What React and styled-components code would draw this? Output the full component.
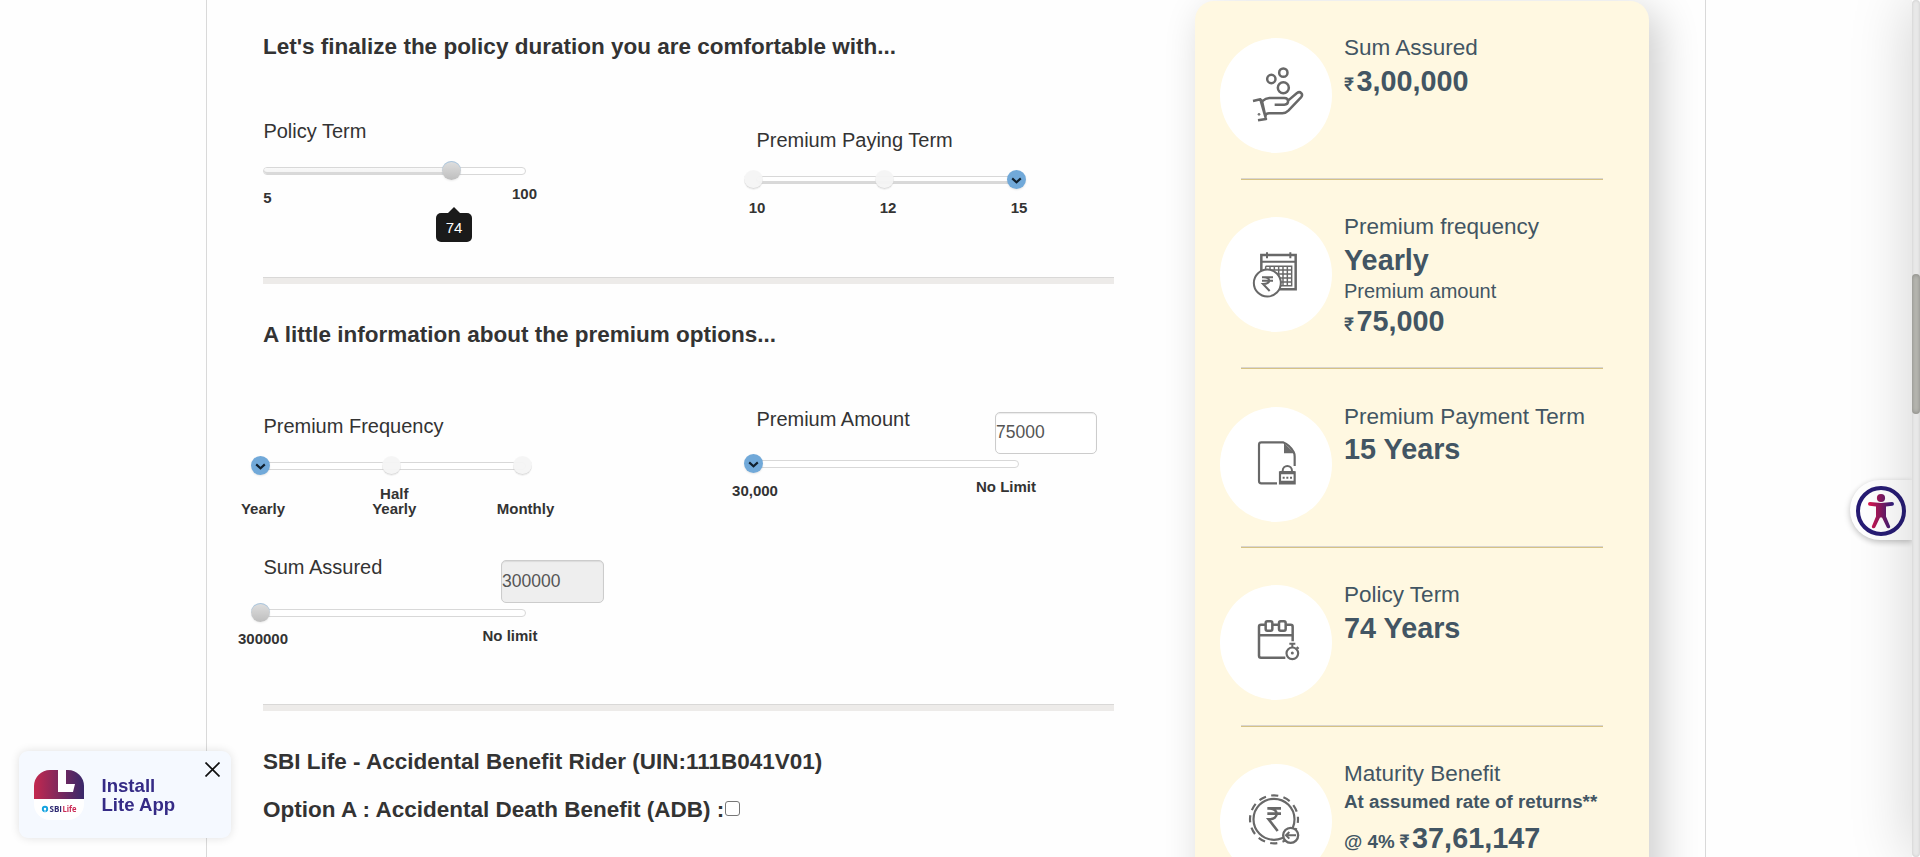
import React from "react";
import styled, { createGlobalStyle, css } from "styled-components";

const GlobalStyle = createGlobalStyle`
  * { box-sizing: border-box; }
  body {
    margin: 0;
    background: #fefefe;
    color: #333;
    font-family: "Liberation Sans", Arial, sans-serif;
    overflow: hidden;
  }
`;

const Page = styled.div`
  height: 857px;
  overflow: hidden;
  padding-left: 206px;
`;

const Container = styled.main`
  display: flex;
  align-items: flex-start;
  width: 1500px;
  height: 857px;
  padding-left: 56px;
  border-left: 1px solid #d9d9d9;
  border-right: 1px solid #d9d9d9;
`;

const FormColumn = styled.div`
  flex: none;
  width: 851px;
  margin-right: 81px;
`;

const Section = styled.section`
  height: ${(p) => p.$height}px;
  padding-top: ${(p) => p.$top}px;
  ${(p) =>
    p.$ruled &&
    css`
      border-bottom: 6px solid #edebe9;
      box-shadow: inset 0 -1px 0 #d9d8d7;
    `}
`;

const Heading = styled.h3`
  margin: 0 0 ${(p) => p.$gap}px;
  font-size: 22.5px;
  line-height: 30px;
  font-weight: 700;
`;

const FieldRow = styled.div`
  display: grid;
  grid-template-columns: 493px 1fr;
  height: ${(p) => p.$height || 148}px;
`;

const Field = styled.div`
  width: 263px;
  padding-top: ${(p) => p.$drop || 0}px;
`;

const FieldHeader = styled.div`
  display: flex;
  align-items: flex-start;
  height: ${(p) => p.$height}px;
`;

const Label = styled.label`
  flex: none;
  width: ${(p) => p.$width || 238}px;
  padding-left: 0.4px;
  font-size: 20px;
  line-height: 28px;
  white-space: nowrap;
`;

const AmountInput = styled.input`
  flex: none;
  width: ${(p) => (p.disabled ? 103 : 102)}px;
  height: ${(p) => (p.disabled ? 43 : 42)}px;
  margin: 7px 0 0;
  padding: 0 0 ${(p) => (p.disabled ? 0 : 2)}px;
  border: 1px solid #ccc;
  border-radius: 5px;
  background: ${(p) => (p.disabled ? "#eee" : "#fff")};
  box-shadow: inset 0 1px 1px rgba(0, 0, 0, 0.08);
  color: #555;
  font: 17.5px "Liberation Sans", Arial, sans-serif;
`;

const Track = styled.div`
  position: relative;
  height: 8px;
  border: 1px solid #d8d8d8;
  border-radius: 4px;
  background: #fff;
`;

const Fill = styled.div`
  height: 6px;
  border-radius: 3px;
  background: ${(p) => (p.$plain ? "#fff" : "linear-gradient(#f9f9f9, #f2f2f2)")};
  box-shadow: inset 0 -2px 0 #d9d9d9;
`;

const knobStyles = {
  stop: css`
    background: rgba(244, 244, 244, 0.94);
    box-shadow: inset 0 -1px 0 rgba(0, 0, 0, 0.1), 0 1px 1px rgba(0, 0, 0, 0.06);
  `,
  grey: css`
    background: linear-gradient(#dfdfdf, #bebebe);
    box-shadow: inset 0 1px 0 #a9c6df, 0 1px 2px rgba(0, 0, 0, 0.08);
  `,
  active: css`
    background: #71a9d9;
    box-shadow: 0 1px 2px rgba(0, 0, 0, 0.1);
  `,
};

const Knob = styled.div`
  position: absolute;
  top: -7px;
  left: -13px;
  display: flex;
  align-items: center;
  justify-content: center;
  width: 19px;
  height: 19px;
  border-radius: 50%;
  ${(p) => knobStyles[p.$kind]}
`;

const Tooltip = styled.div`
  position: absolute;
  top: 45px;
  left: 172px;
  width: 36px;
  height: 29px;
  border-radius: 5px;
  background: #1a1a1a;
  color: #fff;
  font-size: 15px;
  line-height: 29px;
  text-align: center;
  &::before {
    content: "";
    position: absolute;
    left: 12px;
    top: -6px;
    border: 6px solid transparent;
    border-top: 0;
    border-bottom-color: #1a1a1a;
  }
`;

const Ticks = styled.div`
  display: flex;
  justify-content: space-between;
`;

const Tick = styled.div`
  display: flex;
  justify-content: center;
  width: 0;
  margin: ${(p) => p.$top}px ${(p) => p.$pull || 0}px 0 ${(p) => p.$push || 0}px;
  font-size: 15px;
  line-height: 15px;
  font-weight: 700;
  text-align: center;
  white-space: pre;
`;

const OptionLine = styled.label`
  display: flex;
  align-items: center;
  margin-top: 18px;
  font-size: 22.5px;
  line-height: 30px;
  font-weight: 700;
`;

const Checkbox = styled.input`
  appearance: none;
  width: 15px;
  height: 15px;
  margin: 0 0 3px 1px;
  border: 1px solid #767676;
  border-radius: 3px;
  background: #fff;
`;

const SummaryCard = styled.aside`
  flex: none;
  width: 454px;
  height: 1000px;
  margin-top: 1px;
  padding: 37px 25px 0;
  border-radius: 19px;
  background: #fff8e1;
  box-shadow: 10px 10px 40px rgba(0, 0, 0, 0.2);
  color: #425563;
`;

const SummaryItem = styled.div`
  display: flex;
  gap: 12px;
  height: ${(p) => p.$height}px;
`;

const IconDisc = styled.div`
  flex: none;
  width: 112px;
  height: 115px;
  border-radius: 50%;
  background: #fff;
  svg { display: block; width: 112px; height: 115px; }
`;

const SummaryText = styled.div`
  margin-top: -5px;
  white-space: nowrap;
`;

const SummaryTitle = styled.div`
  font-size: 22.5px;
  line-height: 30px;
  margin-bottom: ${(p) => p.$gap ?? 1}px;
`;

const SummaryValue = styled.div`
  font-size: 28.8px;
  line-height: 34px;
  font-weight: 700;
  margin-top: ${(p) => p.$shift || 0}px;
`;

const SummaryCaption = styled.div`
  font-size: 20px;
  line-height: 26px;
  padding-top: 1px;
`;

const SummaryNote = styled.div`
  font-size: 18.75px;
  line-height: 24px;
  font-weight: 700;
`;

const Rate = styled.span`
  font-size: 18.75px;
  line-height: 1;
  margin-right: 5px;
`;

const Currency = styled.span`
  display: inline-block;
  width: 12.5px;
  font-family: Roboto, "Liberation Sans", sans-serif;
  font-size: 19px;
  line-height: 1;
  font-weight: 500;
`;

const Rule = styled.div`
  height: 2px;
  margin: 0 21px ${(p) => p.$gap}px;
  background: linear-gradient(#d9d5d0 50%, #d6c284 50%);
`;

const InstallCard = styled.div`
  position: fixed;
  left: 19px;
  top: 751px;
  display: flex;
  width: 212px;
  height: 87px;
  padding: 19px 11px 0 15px;
  border-radius: 9px;
  background: #f5f9ff;
  box-shadow: 0 0 10px rgba(0, 0, 0, 0.12);
`;

const InstallText = styled.div`
  flex: 1;
  margin: 6px 0 0 17.5px;
  color: #352b86;
  font-size: 18.6px;
  line-height: 19px;
  font-weight: 700;
`;

const CloseIcon = styled.svg`
  flex: none;
  width: 15px;
  height: 15px;
  margin-top: -8px;
`;

const AccessTab = styled.div`
  position: fixed;
  top: 480px;
  right: 8px;
  width: 62px;
  height: 60px;
  padding: 5px;
  border-radius: 30px 0 0 30px;
  background: #fff;
  box-shadow: 0 2px 6px rgba(0, 0, 0, 0.25);
  clip-path: inset(-12px 0 -12px -12px);
`;

const EdgeShade = styled.div`
  position: fixed;
  top: 0;
  right: 8px;
  width: 90px;
  height: 857px;
  overflow: hidden;
  pointer-events: none;
  &::after {
    content: "";
    position: absolute;
    top: 0;
    left: 90px;
    width: 200px;
    height: 857px;
    box-shadow: 0 0 58px rgba(0, 0, 0, 0.18);
  }
`;

const ScrollTrack = styled.div`
  position: fixed;
  top: 0;
  right: 0;
  width: 8px;
  height: 857px;
  padding-top: 274px;
  border-radius: 4px;
  background: #e8e8e8;
  box-shadow: inset 0 0 3px rgba(0, 0, 0, 0.15);
`;

const ScrollThumb = styled.div`
  height: 140px;
  border-radius: 4px;
  background: #babab4;
  box-shadow: inset 0 0 5px rgba(0, 0, 0, 0.3);
`;

const Chevron = () => (
  <svg width="19" height="19" viewBox="0 0 19 19" fill="none">
    <path d="M5.2 8.4l4.3 3.9 4.3-3.9" stroke="#10202e" strokeWidth="2.1" />
  </svg>
);

function Slider({ value, kind, stops = [], plain, tooltip, ticks }) {
  return (
    <>
      <Track>
        {value > 0 && <Fill $plain={plain} style={{ width: `${value}%` }} />}
        {stops.map((s) => (
          <Knob key={s} $kind="stop" style={{ marginLeft: s * 2.62 }} />
        ))}
        <Knob $kind={kind} style={{ marginLeft: value * 2.625 }}>
          {kind === "active" && <Chevron />}
        </Knob>
        {tooltip && <Tooltip>{tooltip}</Tooltip>}
      </Track>
      <Ticks>
        {ticks.map((t) => (
          <Tick key={t.text} $top={t.top} $pull={t.pull} $push={t.push}>
            {t.text}
          </Tick>
        ))}
      </Ticks>
    </>
  );
}

const ink = { fill: "none", stroke: "#686868", strokeWidth: 7.5 };

const HandCoinsIcon = () => (
  <svg viewBox="120 113 336 345" {...ink} strokeLinejoin="round">
    <circle cx="310" cy="217" r="12.5" />
    <circle cx="274" cy="236" r="12.5" />
    <circle cx="310" cy="262" r="16.5" />
    <path d="M219 302l22-5 17 59-24 4M241 297l5 5 11 50" />
    <path d="M246 303c8-7 14-10 22-10h45c15 0 15 20 0 20h-29M325 300l26-22c10-7 20 4 12 13l-38 40c-6 6-10 8-18 8h-40c-6 0-10 3-12 8" />
    <circle cx="237" cy="342" r="4" fill="#777" stroke="none" />
  </svg>
);

const CalendarRupeeIcon = () => (
  <svg viewBox="120 50 336 345" {...ink}>
    <path d="M244 212v-48h103v103h-48" />
    <path d="M244 184h104M261 156v18M331 156v18" strokeWidth="6" />
    <path
      d="M257 198h78v58h-32M257 198v12M270 198v10M283 198v12M296 198v56M309 198v58M322 198v58M262 209h73M288 221h47M298 233h37M302 245h33"
      strokeWidth="4.4"
    />
    <circle cx="262" cy="248" r="40.5" fill="#fff" strokeWidth="6" />
    <path d="M246 231h33M246 241h33M249 231c25-1 25 20 0 20l20 21" strokeWidth="6" />
  </svg>
);

const DocumentLockIcon = () => (
  <svg viewBox="120 50 336 345" {...ink}>
    <path d="M291 279h-47q-7 0-7-7V163q0-7 7-7h65q20 8 32 29c3 5 3 8 3 14v28" strokeWidth="6.5" />
    <path d="M312 158l32 31h-32z" fill="#6b6b6b" stroke="none" />
    <path d="M308 242c0-20 28-20 28 0" strokeWidth="6" />
    <path d="M300 246h44v33h-44z" strokeWidth="6.5" />
    <path d="M300 247h44M300 276h44" strokeWidth="10" />
    <path d="M308 262h30" strokeWidth="6" strokeDasharray="6 5" />
  </svg>
);

const CalendarTimerIcon = () => (
  <svg viewBox="120 585 336 345" {...ink}>
    <path d="M316 803h-73q-6 0-6-6v-87q0-6 6-6h13M277 704h18M318 704h14q6 0 6 6v44M238 736h99" />
    <rect x="257" y="694" width="20" height="28" rx="5" />
    <rect x="297" y="694" width="20" height="28" rx="5" />
    <circle cx="337" cy="790" r="17.5" strokeWidth="6.5" />
    <path d="M328 761h18M337 761v12M350 771l6 5" strokeWidth="6" />
    <circle cx="337" cy="789" r="4.5" fill="#6b6b6b" stroke="none" />
  </svg>
);

const CoinReturnIcon = () => (
  <svg viewBox="120 342 336 345" {...ink}>
    <circle cx="282" cy="508" r="72" strokeWidth="6.5" strokeDasharray="22 15.7" strokeDashoffset="11" />
    <circle cx="282" cy="508" r="61.5" strokeWidth="6.5" />
    <path d="M262 475h41M262 491h41M266 475c32 0 32 33 0 33l27 35" strokeWidth="8" />
    <circle cx="332" cy="556" r="22.5" fill="#fff" strokeWidth="7" />
    <path d="M348 556h-29M328 546l-10 10 10 10" strokeWidth="6" />
  </svg>
);

const AppLogo = () => (
  <svg width="50" height="50" viewBox="0 0 50 50">
    <defs>
      <linearGradient id="logoFill" x1="0" x2="1" y1="0" y2="0">
        <stop offset="0" stopColor="#c3284f" />
        <stop offset="1" stopColor="#38286a" />
      </linearGradient>
      <clipPath id="logoClip">
        <rect width="50" height="50" rx="16" />
      </clipPath>
    </defs>
    <g clipPath="url(#logoClip)">
      <rect width="50" height="50" fill="#fff" />
      <rect width="50" height="29" fill="url(#logoFill)" />
      <path d="M24 0h8v14h9l-2 8H24z" fill="#fff" />
    </g>
    <circle cx="11" cy="39" r="2.2" fill="none" stroke="#13a3e0" strokeWidth="1.9" />
    <path d="M11 39v3" stroke="#fff" strokeWidth=".8" />
    <text x="15.5" y="42" fontSize="8" fontWeight="700" fontFamily="Open Sans, sans-serif" fill="#2f2a72" textLength="12.5" lengthAdjust="spacingAndGlyphs">SBI</text>
    <text x="28.5" y="42" fontSize="8" fontWeight="700" fontFamily="Open Sans, sans-serif" fill="#cb2a55" textLength="14" lengthAdjust="spacingAndGlyphs">Life</text>
  </svg>
);

const AccessIcon = () => (
  <svg width="52" height="50" viewBox="0 0 52 50" overflow="visible">
    <defs>
      <linearGradient id="figure" gradientUnits="userSpaceOnUse" x1="13" y1="20" x2="39" y2="20">
        <stop offset="0" stopColor="#e0124a" />
        <stop offset=".5" stopColor="#84195e" />
        <stop offset="1" stopColor="#2a2080" />
      </linearGradient>
    </defs>
    <circle cx="26" cy="26" r="23" fill="none" stroke="#271c74" strokeWidth="4" />
    <circle cx="26" cy="13" r="4.1" fill="url(#figure)" />
    <path
      fill="url(#figure)"
      d="M15 17l11 1 11-1c2.4 0 2.6 3.4.3 3.7L31 21.500v10l4 9.500c.8 2.200-2.400 3.200-3.300 1.300L27 32.500h-2l-4.700 9.800c-.9 1.900-4.100.9-3.300-1.300l4-9.500v-10l-6.300-.8c-2.300-.3-2.100-3.700.3-3.700z"
    />
  </svg>
);

export default function App() {
  return (
    <>
      <GlobalStyle />
      <Page>
        <Container>
          <FormColumn>
            <Section $top={32} $height={284} $ruled>
              <Heading $gap={55}>Let's finalize the policy duration you are comfortable with...</Heading>
              <FieldRow>
                <Field>
                  <FieldHeader $height={50}>
                    <Label>Policy Term</Label>
                  </FieldHeader>
                  <Slider
                    value={72.6}
                    kind="grey"
                    tooltip="74"
                    ticks={[
                      { text: "5", top: 15, push: 4.5 },
                      { text: "100", top: 11, pull: 1.5 },
                    ]}
                  />
                </Field>
                <Field $drop={9}>
                  <FieldHeader $height={50}>
                    <Label>Premium Paying Term</Label>
                  </FieldHeader>
                  <Slider
                    value={100}
                    kind="active"
                    plain
                    stops={[0, 50]}
                    ticks={[
                      { text: "10", top: 16, push: 1 },
                      { text: "12", top: 16 },
                      { text: "15", top: 16 },
                    ]}
                  />
                </Field>
              </FieldRow>
            </Section>
            <Section $top={36} $height={427} $ruled>
              <Heading $gap={55}>A little information about the premium options...</Heading>
              <FieldRow>
                <Field $drop={7}>
                  <FieldHeader $height={50}>
                    <Label>Premium Frequency</Label>
                  </FieldHeader>
                  <Slider
                    value={0}
                    kind="active"
                    stops={[50, 100]}
                    ticks={[
                      { text: "Yearly", top: 31 },
                      { text: "Half\nYearly", top: 16 },
                      { text: "Monthly", top: 31, pull: 0.5 },
                    ]}
                  />
                </Field>
                <Field>
                  <FieldHeader $height={55}>
                    <Label $width={239}>Premium Amount</Label>
                    <AmountInput defaultValue="75000" />
                  </FieldHeader>
                  <Slider
                    value={0}
                    kind="active"
                    ticks={[
                      { text: "30,000", top: 15, push: -1 },
                      { text: "No Limit", top: 11, pull: 13 },
                    ]}
                  />
                </Field>
              </FieldRow>
              <FieldRow>
                <Field>
                  <FieldHeader $height={55.5}>
                    <Label>Sum Assured</Label>
                    <AmountInput defaultValue="300000" disabled />
                  </FieldHeader>
                  <Slider
                    value={0}
                    kind="grey"
                    ticks={[
                      { text: "300000", top: 14.5 },
                      { text: "No limit", top: 11.5, pull: 16 },
                    ]}
                  />
                </Field>
              </FieldRow>
            </Section>
            <Section $top={36} $height={146}>
              <Heading $gap={0}>SBI Life - Accidental Benefit Rider (UIN:111B041V01)</Heading>
              <OptionLine>
                Option A : Accidental Death Benefit (ADB) :<Checkbox type="checkbox" />
              </OptionLine>
            </Section>
          </FormColumn>

          <SummaryCard>
            <SummaryItem $height={140}>
              <IconDisc><HandCoinsIcon /></IconDisc>
              <SummaryText>
                <SummaryTitle>Sum Assured</SummaryTitle>
                <SummaryValue><Currency>₹</Currency>3,00,000</SummaryValue>
              </SummaryText>
            </SummaryItem>
            <Rule $gap={37} />
            <SummaryItem $height={150}>
              <IconDisc><CalendarRupeeIcon /></IconDisc>
              <SummaryText>
                <SummaryTitle>Premium frequency</SummaryTitle>
                <SummaryValue>Yearly</SummaryValue>
                <SummaryCaption>Premium amount</SummaryCaption>
                <SummaryValue><Currency>₹</Currency>75,000</SummaryValue>
              </SummaryText>
            </SummaryItem>
            <Rule $gap={38} />
            <SummaryItem $height={139}>
              <IconDisc><DocumentLockIcon /></IconDisc>
              <SummaryText>
                <SummaryTitle $gap={0}>Premium Payment Term</SummaryTitle>
                <SummaryValue>15 Years</SummaryValue>
              </SummaryText>
            </SummaryItem>
            <Rule $gap={37} />
            <SummaryItem $height={140}>
              <IconDisc><CalendarTimerIcon /></IconDisc>
              <SummaryText>
                <SummaryTitle>Policy Term</SummaryTitle>
                <SummaryValue>74 Years</SummaryValue>
              </SummaryText>
            </SummaryItem>
            <Rule $gap={37} />
            <SummaryItem $height={160}>
              <IconDisc><CoinReturnIcon /></IconDisc>
              <SummaryText>
                <SummaryTitle>Maturity Benefit</SummaryTitle>
                <SummaryNote>At assumed rate of returns**</SummaryNote>
                <SummaryValue $shift={7}>
                  <Rate>@ 4%</Rate>
                  <Currency>₹</Currency>37,61,147
                </SummaryValue>
              </SummaryText>
            </SummaryItem>
          </SummaryCard>
        </Container>
      </Page>

      <InstallCard>
        <AppLogo />
        <InstallText>Install<br />Lite App</InstallText>
        <CloseIcon viewBox="0 0 15 15">
          <path d="M.5.5l14 14M14.500.5l-14 14" stroke="#111" strokeWidth="1.7" />
        </CloseIcon>
      </InstallCard>
      <AccessTab><AccessIcon /></AccessTab>
      <EdgeShade />
      <ScrollTrack><ScrollThumb /></ScrollTrack>
    </>
  );
}
